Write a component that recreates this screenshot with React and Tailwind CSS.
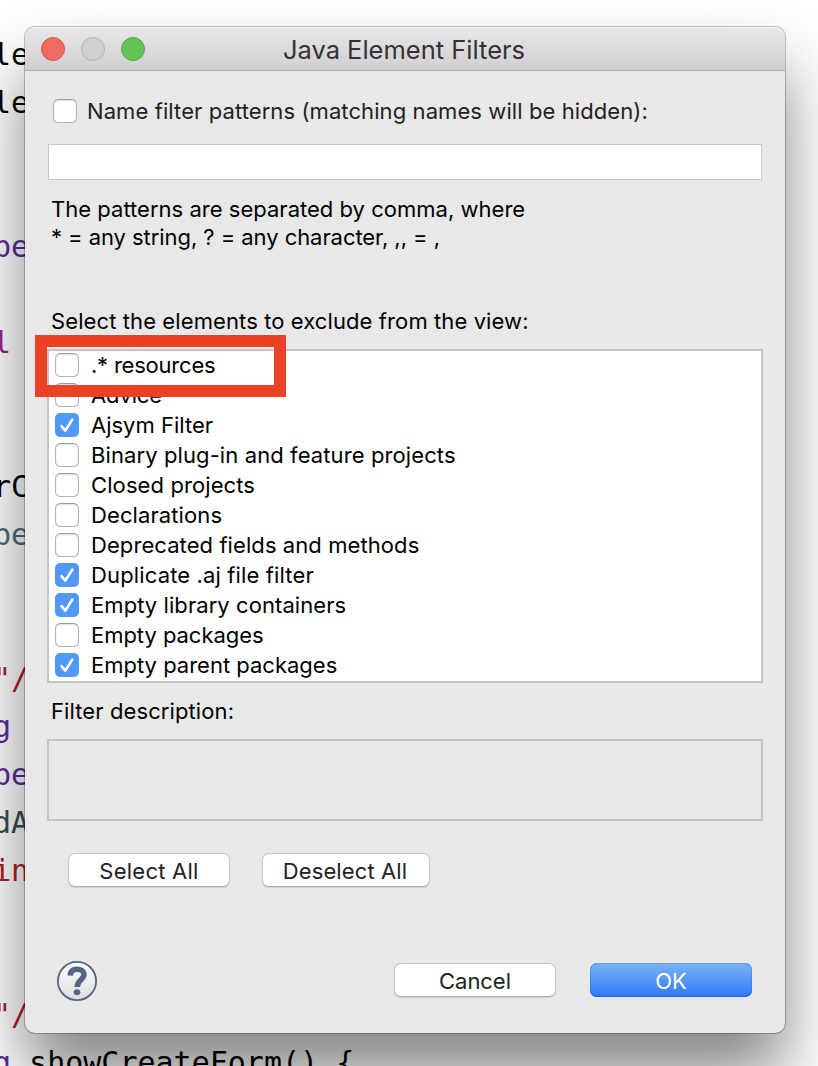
const codeLines = [
  { top: 'le', color: 'text-black' },
  { top: 'le', color: 'text-black' },
  {},
  {},
  { top: 'be', color: 'text-[#5a2f9c]' },
  {},
  { top: 'l', color: 'text-[#9b2393]' },
  {},
  {},
  { top: 'rC', color: 'text-black' },
  { top: 'be', color: 'text-[#4e7075]' },
  {},
  {},
  { top: '"/', color: 'text-[#b02025]' },
  { top: 'g', color: 'text-[#5a2f9c]' },
  { top: 'be', color: 'text-[#5a2f9c]' },
  { top: 'dA', color: 'text-[#344f55]' },
  { top: 'in', color: 'text-[#b02025]' },
  {},
  {},
  { top: '"/', color: 'text-[#b02025]' },
  { top: 'g', color: 'text-[#5a2f9c]', rest: ' showCreateForm() {' },
];

const filters = [
  { label: '.* resources', track: 'tracking-[-0.22px]' },
  { label: 'Advice', track: 'tracking-[-0.15px]' },
  { label: 'Ajsym Filter', track: 'tracking-[0px]', on: true },
  { label: 'Binary plug-in and feature projects', track: 'tracking-[0.1px]' },
  { label: 'Closed projects', track: 'tracking-[0.1px]' },
  { label: 'Declarations', track: 'tracking-[0.1px]' },
  { label: 'Deprecated fields and methods', track: 'tracking-[0.08px]' },
  { label: 'Duplicate .aj file filter', track: 'tracking-[0.14px]', on: true },
  { label: 'Empty library containers', track: 'tracking-[0.07px]', on: true },
  { label: 'Empty packages', track: 'tracking-[-0.04px]' },
  { label: 'Empty parent packages', track: 'tracking-[0px]', on: true },
];

function Checkbox({ on }) {
  if (on) {
    return (
      <span className="flex size-6 shrink-0 rounded-[5px] bg-[#5298f7]">
        <svg viewBox="0 0 24 24" className="size-6" fill="none" stroke="white" strokeWidth="2.7" strokeLinecap="round" strokeLinejoin="round">
          <path d="M6.5 13.2 L10.3 17.6 L17.3 6.6" />
        </svg>
      </span>
    );
  }
  return (
    <span className="size-6 shrink-0 rounded-[5.5px] border border-[#b4b4b4] border-t-[#9c9c9c] bg-white shadow-[inset_0_1px_2px_rgba(0,0,0,0.14)]" />
  );
}

function Button({ children, className }) {
  return (
    <button
      className={`flex h-[34px] items-center justify-center rounded-[7px] pt-px ${className}`}
    >
      {children}
    </button>
  );
}

const plain = 'border border-[#c6c6c6] border-b-[#b0b0b0] bg-white text-[#222] shadow-[0_1px_1px_rgba(0,0,0,0.12)]';

export default function App() {
  return (
    <div className="relative h-[1066px] w-[818px] overflow-hidden bg-white">
      <div className="-ml-[7px] flex flex-col whitespace-pre pt-[31px] font-['DejaVu_Sans_Mono',monospace] text-[30px] leading-[48px]">
        {codeLines.map((line, i) => (
          <div key={i} className={`h-12 shrink-0 ${line.color ?? ''}`}>
            {line.top}
            {line.rest && <span className="text-black">{line.rest}</span>}
          </div>
        ))}
      </div>

      <div className="absolute left-[25px] top-[27px] flex h-[1006px] w-[760px] flex-col rounded-[10px] bg-[#e8e8e8] font-['Inter',sans-serif] text-[22px] leading-[28px] text-black shadow-[0_0_0_1px_rgba(0,0,0,0.24),0_42px_66px_rgba(0,0,0,0.48)]">
        <header className="grid h-11 shrink-0 grid-cols-[1fr_auto_1fr] items-center rounded-t-[10px] border-b border-[#adadad] bg-linear-to-b from-[#e9e7ea] to-[#d1ced2] pl-[15px] pr-[17px] shadow-[inset_0_1px_0_#f6f5f6]">
          <div className="flex gap-4 pl-px">
            <span className="size-6 rounded-full border border-[#d9564b] bg-[#ed6b60]" />
            <span className="size-6 rounded-full border border-[#b3b3b3] bg-[#d0d0d0]" />
            <span className="size-6 rounded-full border border-[#4fae42] bg-[#62c655]" />
          </div>
          <h1 className="pt-[2px] text-[25.5px] text-[#333]">Java Element Filters</h1>
        </header>

        <main className="flex grow flex-col px-[22px]">
          <label className="mt-[26px] flex h-7 items-center gap-[10px] pl-[6px] text-[#222]">
            <Checkbox />
            <span className="whitespace-nowrap pb-px tracking-[0.09px]">Name filter patterns (matching names will be hidden):</span>
          </label>
          <div className="mx-[1px] mt-[19px] h-9 border border-[#c9c9c9] bg-white" />
          <p className="mt-[15px] whitespace-nowrap pl-1 tracking-[0.02px]">The patterns are separated by comma, where</p>
          <p className="whitespace-nowrap pl-1 tracking-[-0.06px]">* = any string, ? = any character, ,, = ,</p>

          <h2 className="mt-[56px] whitespace-nowrap pl-1 tracking-[0.1px]">
            Select the elements to exclude from the view:
          </h2>
          <div className="relative mt-[14px] h-[334px] border-2 border-[#c5c5c5] bg-white">
            <ul className="-mt-px">
              {filters.map((f) => (
                <li key={f.label} className="flex h-[30px] items-center gap-3 pl-[6px]">
                  <Checkbox on={f.on} />
                  <span className={`whitespace-nowrap pb-px ${f.track}`}>{f.label}</span>
                </li>
              ))}
            </ul>
            <div className="absolute -left-[14px] -top-[16px] h-[62px] w-[251px] border-12 border-[#ec4027]" />
          </div>

          <h2 className="mt-[14px] whitespace-nowrap pl-1 tracking-[0.1px]">
            Filter description:
          </h2>
          <div className="mt-[14px] h-[82px] border-2 border-[#c5c5c5]" />

          <div className="mt-[32px] flex gap-[32px] pl-[21px]">
            <Button className={`w-[162px] ${plain}`}>
              <span className="tracking-[0.25px]">Select All</span>
            </Button>
            <Button className={`w-[168px] pr-[2px] ${plain}`}>
              <span className="tracking-[0.12px]">Deselect All</span>
            </Button>
          </div>

          <footer className="mt-[74px] flex items-center pl-[10px] pr-[11px]">
            <svg viewBox="0 0 40 40" className="size-10">
              <defs>
                <linearGradient id="help" x1="0" y1="0" x2="0" y2="1">
                  <stop offset="0" stopColor="#fbfbfb" />
                  <stop offset="1" stopColor="#dedede" />
                </linearGradient>
              </defs>
              <circle cx="20" cy="20" r="19.1" fill="url(#help)" stroke="#566583" strokeWidth="1.8" />
              <path d="M13.2 14.6 C13.4 9.8 16.2 8.2 20 8.2 C24.2 8.2 27 10.2 27 13.6 C27 18.8 20.2 18.8 20.2 26" fill="none" stroke="#566583" strokeWidth="5.4" />
              <ellipse cx="20" cy="31.2" rx="3.3" ry="3" fill="#566583" />
            </svg>
            <Button className={`-mt-[2px] ml-auto mr-[34px] w-[162px] ${plain}`}>
              <span className="tracking-[-0.05px]">Cancel</span>
            </Button>
            <Button className="-mt-[2px] w-[162px] bg-linear-to-b from-[#7bb2f5] to-[#2d79f6] text-white shadow-[inset_0_1px_0_#5f9fee,inset_0_-1px_0_#1c5ff0,inset_0_0_0_1px_rgba(40,110,240,0.35)]">
              <span>OK</span>
            </Button>
          </footer>
        </main>
      </div>
    </div>
  );
}
